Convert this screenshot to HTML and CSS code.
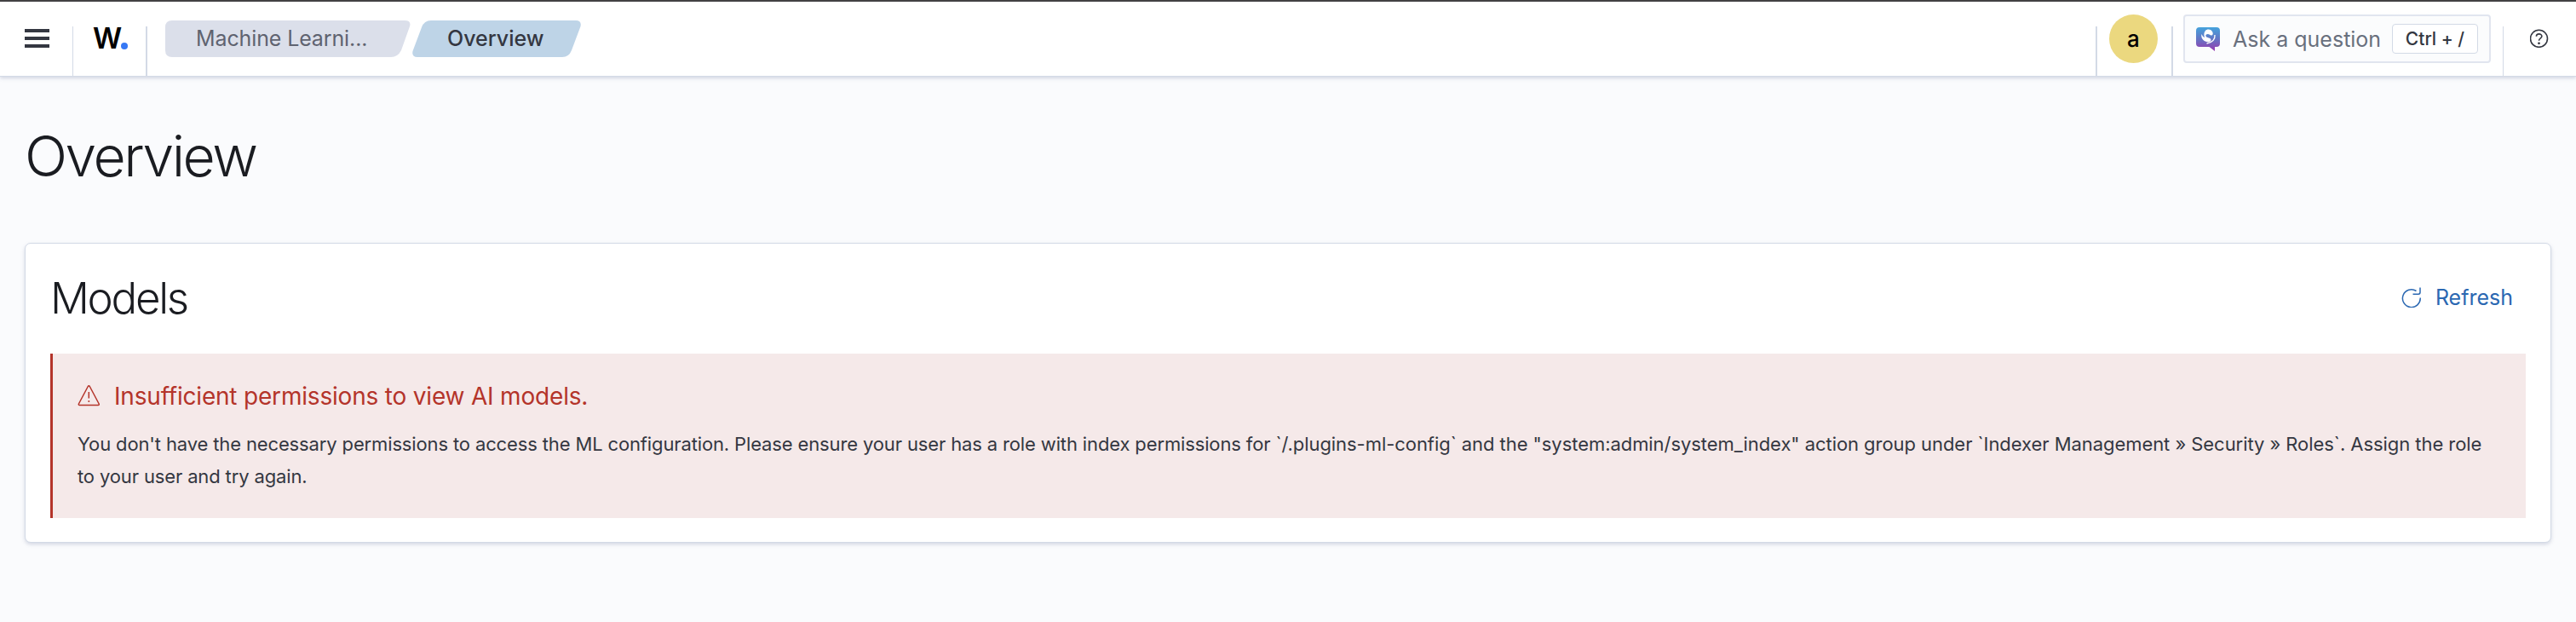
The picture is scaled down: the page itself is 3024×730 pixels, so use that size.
FILE: index.html
```html
<!DOCTYPE html>
<html lang="en">
<head>
<meta charset="utf-8">
<title>Overview</title>
<link rel="stylesheet" href="styles.css">
</head>
<body>
<header class="header">
  <div class="header-left">
    <button class="menu" aria-label="Menu"><i></i><i></i><i></i></button>
    <div class="logo"><span class="logo-w">W</span><span class="logo-dot"></span></div>
    <nav class="crumbs">
      <div class="crumb crumb-first">
        <svg class="crumb-bg" width="288" height="43" viewBox="0 0 288 43"><path d="M8 0H281Q289 0 287 7L277 35Q273 43 265 43H8Q0 43 0 35V8Q0 0 8 0Z" fill="#dbdfea"/></svg>
        <span class="crumb-text">Machine Learni...</span>
      </div>
      <div class="crumb crumb-last">
        <svg class="crumb-bg" width="198" height="43" viewBox="0 0 198 43"><path d="M20 0H192Q199 0 197.500 7L187 35Q184 43 176 43H6Q-1 43 .5 36L11 8Q14 0 22 0Z" fill="#bed4e7"/></svg>
        <span class="crumb-text">Overview</span>
      </div>
    </nav>
  </div>
  <div class="header-right">
    <div class="user"><span class="avatar">a</span></div>
    <div class="ask">
      <svg class="ask-icon" width="28" height="28" viewBox="0 0 28 28"><defs><linearGradient id="chat" x1="0" y1="0" x2="0" y2="1"><stop offset="0" stop-color="#45a3dc"/><stop offset=".5" stop-color="#6474c4"/><stop offset="1" stop-color="#9a3bb0"/></linearGradient></defs><path d="M4 0H24Q28 0 28 4V19Q28 23 24 23H22V28L15.500 23H4Q0 23 0 19V4Q0 0 4 0Z" fill="url(#chat)"/><path d="M11 4C13 1.500 18 2 19.500 6C20.500 9 18.500 10.500 16.500 9C14 7 10.500 8 11.500 10.500C12.500 12.500 17.500 12 17.500 15C17 18 11 18 8 14.500C6 12 6 9.500 6.500 8C7.500 10 8 11 10 12C9 9 9 6 11 4Z" fill="#fff"/><path d="M22 9C22.500 14 19 18 12.500 19" fill="none" stroke="#fff" stroke-width="1.400"/></svg>
      <span class="ask-text">Ask a question</span>
      <span class="kbd">Ctrl + /</span>
    </div>
    <div class="help"><svg width="22" height="22" viewBox="0 0 22 22" fill="none" stroke="#343741" stroke-width="1.600"><circle cx="10.500" cy="11.300" r="10"/><path d="M7.400 8.700C7.400 5 13.900 5 13.900 8.600C13.900 10.900 10.500 10.800 10.500 13.700"/><circle cx="10.500" cy="16.800" r="1.400" fill="#343741" stroke="none"/></svg></div>
  </div>
</header>
<main class="page">
  <h1 class="page-title">Overview</h1>
  <section class="panel">
    <div class="panel-head">
      <h2 class="panel-title">Models</h2>
      <button class="refresh">
        <svg width="24" height="24" viewBox="0 0 24 24" fill="none" stroke="#2b68b2" stroke-width="1.500"><path d="M17.500 4.500A10.400 10.400 0 1 0 22.200 12.500"/><path d="M22 .5V6Q22 8.200 20 8.200H13.500"/></svg>
        <span>Refresh</span>
      </button>
    </div>
    <div class="callout">
      <h3 class="callout-title">
        <svg width="26" height="26" viewBox="0 0 26 26" fill="none" stroke="#b4342a" stroke-width="1.500" stroke-linejoin="round"><path d="M12.300 1.500Q13.300 0 14.300 1.500L25.200 22Q25.600 23.500 24.200 23.500H2.400Q1 23.500 1.400 22Z"/><path d="M13.300 8V15.500"/><circle cx="13.300" cy="19" r="1" fill="#b4342a" stroke="none"/></svg>
        <span>Insufficient permissions to view AI models.</span>
      </h3>
      <p class="callout-text">You don't have the necessary permissions to access the ML configuration. Please ensure your user has a role with index permissions for <span class="callout-detail">`/.plugins-ml-config` and the "system:admin/system_index" action group under `Indexer Management » Security » Roles`. Assign the role</span><br>to your user and try again.</p>
    </div>
  </section>
</main>
</body>
</html>
```
FILE: styles.css
```css
* { box-sizing: border-box; }
body { margin: 0; background: #fafbfd; color: #343741; font-family: Inter, sans-serif; height: 730px; overflow: hidden; }
button { border: 0; background: none; padding: 0; font: inherit; }
svg { display: block; flex: none; }
.header { height: 90px; border-top: 2px solid #424143; border-bottom: 1px solid #d3dae6; background: #fff; display: flex; justify-content: space-between; box-shadow: 0 2px 4px rgba(100, 110, 150, .25); }
.header-left, .header-right { display: flex; align-items: flex-end; }
.menu { width: 85px; height: 58px; padding: 3px 0 0 29px; display: flex; flex-direction: column; gap: 5px; align-items: flex-start; justify-content: flex-start; }
.menu i { width: 29px; height: 4px; background: #343741; }
.logo { width: 88px; height: 58px; border-left: 1px solid #d3dae6; border-right: 2px solid #d3dae6; display: flex; padding-left: 23px; }
.logo-w { font-size: 33.500px; font-weight: 600; line-height: 29px; color: #000; width: 33px; }
.logo-dot { width: 8px; height: 8px; border-radius: 50%; background: #3678f5; margin-top: 19px; }
.crumbs { display: flex; gap: 2px; margin-left: 21px; height: 65px; }
.crumb { display: grid; height: 43px; font-size: 25px; line-height: 42px; }
.crumb-bg, .crumb-text { grid-area: 1 / 1; }
.crumb-first .crumb-text { padding-left: 36px; color: #5f6370; letter-spacing: -.12px; }
.crumb-last .crumb-text { padding-left: 41px; font-weight: 500; }
.user { width: 91px; height: 58px; border-left: 2px solid #d3dae6; border-right: 2px solid #d3dae6; padding-left: 14px; }
.avatar { width: 57px; height: 57px; margin-top: -14px; border-radius: 50%; background: #ebd87f; color: #000; font-size: 26px; font-weight: 500; display: flex; align-items: center; justify-content: center; }
.ask { width: 361px; height: 57px; margin: 0 14px 15px 12px; border: 2px solid #e1e5ef; border-radius: 4px; background: #fbfcfd; display: flex; align-items: center; padding-left: 13px; }
.ask-text { margin-left: 15px; width: 187px; font-size: 25px; color: #69707d; white-space: nowrap; }
.kbd { width: 101px; height: 35px; border: 1px solid #d3dae6; border-radius: 4px; background: #fff; display: flex; align-items: center; justify-content: center; font-size: 21px; font-weight: 500; white-space: nowrap; }
.help { width: 86px; height: 58px; border-left: 1px solid #d3dae6; padding: 3px 0 0 31px; }
.page { padding: 0 29px; }
.page-title { margin: 0; padding-top: 53px; height: 195px; font-size: 66px; font-weight: 300; line-height: 80px; color: #1a1c21; letter-spacing: -2.500px; }
.panel { height: 352px; border: 1px solid #d3dae6; border-radius: 7px; background: #fff; padding: 29px; box-shadow: 0 2px 4px rgba(100, 110, 150, .25); }
.panel-head { height: 100px; display: flex; justify-content: space-between; }
.panel-title { margin: 0; font-size: 51px; font-weight: 300; line-height: 69px; color: #1a1c21; letter-spacing: -2.300px; }
.refresh { height: 68px; display: flex; align-items: center; gap: 16px; padding-right: 15px; color: #2b68b2; font-size: 25px; }
.callout { height: 193px; border-left: 3px solid #b4342a; background: #f5e9e9; padding: 29px; }
.callout-title { margin: 0; display: flex; align-items: center; gap: 17px; height: 42px; color: #b4342a; font-size: 28px; font-weight: 400; letter-spacing: -.19px; }
.callout-text { margin: 16px 0 0; font-size: 22px; line-height: 38px; white-space: nowrap; letter-spacing: -.135px; }
.callout-detail { letter-spacing: -.055px; }
```
